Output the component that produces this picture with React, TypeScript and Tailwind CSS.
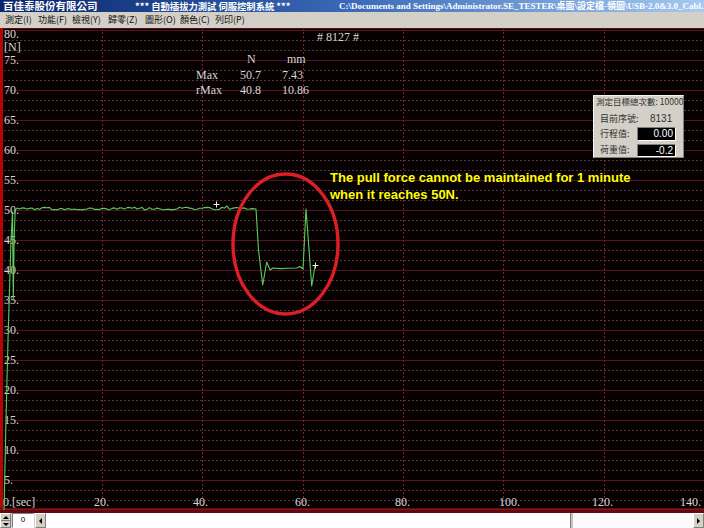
import React from 'react';

// conversion helpers: chart svg starts at page y=28
const vy = (v: number) => 482 - 6 * v;
const tx = (t: number) => 1.5 + 5.02 * t;

const rnd = (i: number) => {
  const s = Math.sin(i * 12.9898 + 4.1) * 43758.5453;
  return s - Math.floor(s);
};

// green force curve, page coords -> svg coords (y - 28)
const buildCurve = () => {
  const pts: [number, number][] = [
    [4, 510], [6, 420], [8, 340], [9.5, 290], [11, 240], [12.5, 212],
    [13.3, 300], [14.2, 236], [15.2, 210],
  ];
  for (let x = 17; x <= 254; x += 2.5) {
    let y = 208.6 + (rnd(x) - 0.5) * 2.6;
    if (Math.abs(x - 228) < 1.5) y = 206;
    pts.push([x, y]);
  }
  pts.push(
    [256, 209], [258.5, 250], [262.7, 285], [266.7, 262], [270, 270], [273, 268],
    [280, 268.6], [288, 268.2], [296.7, 268], [300, 266.5], [303, 269], [306, 209],
    [311.7, 286], [315, 266]
  );
  return pts.map(([x, y]) => `${x},${(y - 28).toFixed(1)}`).join(' ');
};
const curve = buildCurve();

const menus = [
  { t: '測定(I)', w: 'w-[33px]' },
  { t: '功能(F)', w: 'w-[34px]' },
  { t: '檢視(Y)', w: 'w-[36px]' },
  { t: '歸零(Z)', w: 'w-[37px]' },
  { t: '圖形(O)', w: 'w-[35px]' },
  { t: '顏色(C)', w: 'w-[35px]' },
  { t: '列印(P)', w: 'w-[35px]' },
];

const xLabels = [
  { x: 94, t: '20.' }, { x: 193, t: '40.' }, { x: 295, t: '60.' }, { x: 395, t: '80.' },
  { x: 499, t: '100.' }, { x: 592, t: '120.' }, { x: 680, t: '140.' },
];

function Arrow({ dir }: { dir: 'up' | 'down' | 'left' | 'right' }) {
  const p = {
    up: '0,4 3,1 6,4',
    down: '0,1 3,4 6,1',
    left: '4,0 1,3 4,6',
    right: '1,0 4,3 1,6',
  }[dir];
  const horiz = dir === 'left' || dir === 'right';
  return (
    <svg width={horiz ? 5 : 6} height={horiz ? 6 : 5} className="block">
      <polygon points={p} fill="#000" />
    </svg>
  );
}

function Chart() {
  const majors = Array.from({ length: 16 }, (_, i) => 80 - i * 5);
  const minors: number[] = [];
  for (let v = 80; v > 0; v -= 5) {
    minors.push(v - 5 / 3, v - 10 / 3);
  }
  return (
    <svg width={704} height={485} className="block">
      <rect x={0} y={0} width={704} height={485} fill="#060001" />
      {/* minor dotted rows */}
      {minors.map((v) => (
        <line key={'m' + v} x1={4} x2={704} y1={Math.round(vy(v)) + 0.5} y2={Math.round(vy(v)) + 0.5} stroke="#4d3b3b" strokeDasharray="2 2" />
      ))}
      {/* major rows */}
      {majors.map((v) => (
        <line key={'M' + v} x1={4} x2={704} y1={vy(v) + 0.5} y2={vy(v) + 0.5} stroke="#541226" strokeWidth={1} />
      ))}
      {/* vertical dotted columns */}
      {[20, 40, 60, 80, 100, 120].map((t) => (
        <line key={'v' + t} x1={Math.round(tx(t)) + 0.5} x2={Math.round(tx(t)) + 0.5} y1={0} y2={482} stroke="#7a2436" strokeDasharray="2 2" />
      ))}
      {/* frame */}
      <line x1={0} x2={704} y1={0.5} y2={0.5} stroke="#5a0a10" />
      <rect x={0} y={0} width={3} height={485} fill="#b40404" />
      <rect x={0} y={480} width={704} height={5} fill="#5e0a0e" />
      <line x1={0} x2={704} y1={481.5} y2={481.5} stroke="#8a1414" />

      {/* y labels */}
      <g fontFamily="'Liberation Serif', serif" fontSize={12} fill="#d6d6d6">
        <text x={4} y={10}>80.</text>
        <text x={4} y={23}>[N]</text>
        {majors.slice(1).map((v) => (
          <text key={'l' + v} x={4} y={vy(v) + 4}>{v}.</text>
        ))}
        <text x={3} y={478}>0.[sec]</text>
        {xLabels.map((l) => (
          <text key={l.t} x={l.x} y={478}>{l.t}</text>
        ))}
      </g>

      {/* force curve */}
      <polyline points={curve} fill="none" stroke="#5ccd5c" strokeWidth={1.1} strokeLinejoin="round" />
      <g stroke="#f0f0f0" strokeWidth={1}>
        <line x1={213.5} x2={219.5} y1={176.5} y2={176.5} />
        <line x1={216.5} x2={216.5} y1={173.5} y2={179.5} />
        <line x1={312.5} x2={318.5} y1={237.5} y2={237.5} />
        <line x1={315.5} x2={315.5} y1={234.5} y2={240.5} />
      </g>

      {/* highlight */}
      <ellipse cx={285.5} cy={216} rx={52.5} ry={70} fill="none" stroke="#dd1e26" strokeWidth={3.4} />
    </svg>
  );
}

export default function App() {
  return (
    <div className="w-[704px] h-[528px] flex flex-col overflow-hidden bg-[#d4d0c8] select-none">
      {/* title bar */}
      <div className="h-[12px] shrink-0 flex items-center bg-gradient-to-r from-[#0a246a] via-[#3a6ab8] to-[#a6caf0] text-white font-bold whitespace-nowrap overflow-hidden">
        <span className="shrink-0 pl-[3px] w-[135px] text-[10.5px] leading-[12px] font-['Noto_Sans_CJK_TC',sans-serif]">百佳泰股份有限公司</span>
        <span className="shrink-0 w-[204px] text-[9.3px] leading-[12px] font-['Noto_Sans_CJK_TC',sans-serif]">*** 自動插拔力測試 伺服控制系統 ***</span>
        <span className="shrink-0 text-[9px] leading-[12px] font-['Liberation_Serif','Noto_Sans_CJK_TC',serif]">C:\Documents and Settings\Administrator.SE_TESTER\桌面\設定檔-領圖\USB-2.0&amp;3.0_Cabl...</span>
      </div>

      {/* menu bar */}
      <div className="h-[16px] shrink-0 flex items-center pl-[5px] text-[9px] leading-[16px] text-[#111] font-['Noto_Sans_CJK_TC',sans-serif] whitespace-nowrap">
        {menus.map((m) => (
          <span key={m.t} className={`${m.w} shrink-0`}>{m.t}</span>
        ))}
      </div>

      {/* chart */}
      <div className="relative h-[485px] shrink-0">
        <Chart />

        <div className="absolute left-[317px] top-[2px] text-[12px] leading-[14px] text-[#d6d6d6] font-['Liberation_Serif',serif]"># 8127 #</div>

        <div className="absolute left-[196px] top-[24px] text-[12px] leading-[15.5px] text-[#d6d6d6] font-['Liberation_Serif',serif]">
          <div className="flex"><span className="w-[44px]" /><span className="w-[42px] pl-[7px]">N</span><span className="pl-[5px]">mm</span></div>
          <div className="flex"><span className="w-[44px]">Max</span><span className="w-[42px]">50.7</span><span>7.43</span></div>
          <div className="flex"><span className="w-[44px]">rMax</span><span className="w-[42px]">40.8</span><span>10.86</span></div>
        </div>

        {/* counter panel */}
        <div className="absolute left-[593px] top-[67px] w-[91px] h-[63px] bg-[#d4d0c8] border border-t-[#f4f4f4] border-l-[#f4f4f4] border-r-[#808080] border-b-[#808080] text-[9px] text-[#303030] font-['Noto_Sans_CJK_TC',sans-serif]">
          <div className="h-[11px] leading-[10px] pl-[2px] text-[8.5px] whitespace-nowrap">測定目標總次數: 10000</div>
          <div className="flex items-center h-[15px] mt-[4px] pl-[6px]">
            <span className="w-[50px]">目前序號:</span>
            <span className="text-[10px] font-['Liberation_Sans',sans-serif]">8131</span>
          </div>
          <div className="flex items-center h-[16px] pl-[6px]">
            <span className="w-[37px]">行程值:</span>
            <span className="w-[39px] h-[14px] bg-black border border-t-[#808080] border-l-[#808080] border-r-white border-b-white text-white text-right pr-[2px] text-[10px] leading-[12px] font-['Liberation_Sans',sans-serif]">0.00</span>
          </div>
          <div className="flex items-center h-[16px] pl-[6px]">
            <span className="w-[37px]">荷重值:</span>
            <span className="w-[39px] h-[13px] bg-black border border-t-[#808080] border-l-[#808080] border-r-white border-b-white text-white text-right pr-[2px] text-[10px] leading-[11px] font-['Liberation_Sans',sans-serif]">-0.2</span>
          </div>
        </div>

        <div className="absolute left-[330px] top-[142px] text-[13px] leading-[16.5px] font-bold text-[#ffff00] font-['Liberation_Sans',Arial,sans-serif] whitespace-nowrap">
          <div>The pull force cannot be maintained for 1 minute</div>
          <div>when it reaches 50N.</div>
        </div>
      </div>

      {/* bottom scroll strip */}
      <div className="h-[15px] shrink-0 flex items-stretch bg-[#d4d0c8]">
        <div className="w-[11px] flex flex-col border border-t-white border-l-white border-r-[#808080] border-b-[#808080]">
          <div className="flex-1 flex items-center justify-center"><Arrow dir="up" /></div>
          <div className="flex-1 flex items-center justify-center border-t border-[#808080]"><Arrow dir="down" /></div>
        </div>
        <div className="w-[22px] ml-[1px] bg-white border border-t-[#808080] border-l-[#808080] border-r-white border-b-white text-[8px] leading-[12px] text-center text-black font-['Liberation_Sans',sans-serif]">0</div>
        <div className="w-[11px] ml-[1px] flex items-center justify-center border border-t-white border-l-white border-r-[#808080] border-b-[#808080]"><Arrow dir="left" /></div>
        <div className="flex-1 bg-white" />
        <div className="w-[3px] bg-[#c8c4bc] border-l border-[#808080]" />
        <div className="w-[120px] bg-[#fbfbfb]" />
        <div className="w-[11px] flex items-center justify-center border border-t-white border-l-white border-r-[#808080] border-b-[#808080]"><Arrow dir="right" /></div>
      </div>
    </div>
  );
}
